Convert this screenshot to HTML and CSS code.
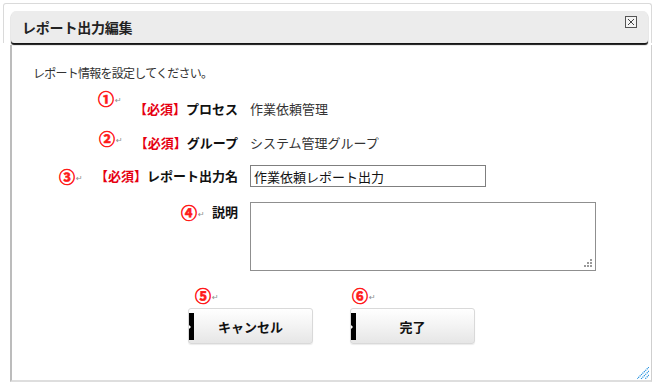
FILE: index.html
```html
<!DOCTYPE html>
<html lang="ja">
<head>
<meta charset="utf-8">
<title>レポート出力編集</title>
<link rel="stylesheet" href="styles.css">
</head>
<body>
<div class="dialog">
  <div class="head-frame">
    <div class="titlebar">
      <span class="title">レポート出力編集</span>
      <span class="close">
        <svg width="12" height="12" viewBox="0 0 12 12"><rect x="0.5" y="0.5" width="11" height="11" fill="#f4f4f4" stroke="#555"/><path d="M3 3L9 9M9 3L3 9" stroke="#444" stroke-width="1"/></svg>
      </span>
    </div>
  </div>
  <div class="panel">
    <p class="intro">レポート情報を設定してください。</p>

    <div class="row r1">
      <span class="mark m1"><span class="num">①</span><span class="ret">↵</span></span>
      <div class="label"><span class="req">【必須】</span>プロセス</div>
      <div class="value">作業依頼管理</div>
    </div>

    <div class="row r2">
      <span class="mark m2"><span class="num">②</span><span class="ret">↵</span></span>
      <div class="label"><span class="req">【必須】</span>グループ</div>
      <div class="value">システム管理グループ</div>
    </div>

    <div class="row r3">
      <span class="mark m3"><span class="num">③</span><span class="ret">↵</span></span>
      <div class="label"><span class="req">【必須】</span>レポート出力名</div>
      <div class="value"><input class="text-input" type="text" value="作業依頼レポート出力"></div>
    </div>

    <div class="row r4">
      <span class="mark m4"><span class="num">④</span><span class="ret">↵</span></span>
      <div class="label">説明</div>
      <div class="value">
        <div class="ta-wrap">
          <textarea class="text-area"></textarea>
          <svg class="ta-grip" width="8" height="8" viewBox="0 0 8 8"><g fill="#9a9a9a"><rect x="6" y="0" width="2" height="2"/><rect x="3" y="3" width="2" height="2"/><rect x="6" y="3" width="2" height="2"/><rect x="0" y="6" width="2" height="2"/><rect x="3" y="6" width="2" height="2"/><rect x="6" y="6" width="2" height="2"/></g></svg>
        </div>
      </div>
    </div>

    <div class="actions">
      <div class="btn-slot">
        <span class="mark m5"><span class="num">⑤</span><span class="ret">↵</span></span>
        <button class="btn" type="button">キャンセル</button>
      </div>
      <div class="btn-slot">
        <span class="mark m6"><span class="num">⑥</span><span class="ret">↵</span></span>
        <button class="btn" type="button">完了</button>
      </div>
    </div>

    <svg class="resize-grip" width="12" height="12" viewBox="0 0 12 12">
      <g stroke="#1f8fe0" stroke-width="1.2" stroke-dasharray="1.2 0.8">
        <path d="M12 0L0 12"/>
        <path d="M12 4L4 12"/>
        <path d="M12 8L8 12"/>
      </g>
    </svg>
  </div>
</div>
</body>
</html>
```

FILE: styles.css
```css
html, body {
  margin: 0;
  padding: 0;
  background: #ffffff;
}

body {
  font-family: "Noto Sans CJK JP", "Noto Sans", sans-serif;
  color: #222;
}

.dialog {
  position: relative;
  width: 649px;
  height: 379px;
  margin: 3px 0 0 3px;
}

.head-frame {
  border: 1px solid #dadada;
  border-bottom: none;
  border-radius: 3px 3px 0 0;
  padding: 7px 3px 0 7px;
}

.titlebar {
  height: 32px;
  background: #ececec;
  border-radius: 5px 5px 3px 3px;
  box-shadow: 0 2px 1px #151515;
  display: flex;
  align-items: center;
  justify-content: space-between;
  padding: 0 11px 0 11px;
}

.title {
  font-size: 14px;
  font-weight: bold;
  color: #222;
  letter-spacing: -0.2px;
}

.close {
  align-self: flex-start;
  margin-top: 5px;
  width: 12px;
  height: 12px;
  display: block;
}

.close svg {
  display: block;
}

.panel {
  position: relative;
  margin: 2px 0 0 7px;
  height: 337px;
  box-sizing: border-box;
  border-left: 2px solid #bcbcbc;
  border-right: 1px solid #cfcfcf;
  border-bottom: 2px solid #dedede;
}

.intro {
  margin: 0 0 0 21px;
  padding-top: 20px;
  font-size: 12px;
  line-height: 16px;
  color: #333;
  letter-spacing: -0.75px;
}

.row {
  position: relative;
  display: flex;
  align-items: flex-start;
}

.r1 { margin-top: 18px; }
.r2 { margin-top: 14px; }
.r3 { margin-top: 12px; }
.r4 { margin-top: 15px; }

.label {
  flex: none;
  width: 226px;
  text-align: right;
  font-size: 13px;
  font-weight: bold;
  line-height: 20px;
  color: #111;
  white-space: nowrap;
}

.r3 .label {
  line-height: 22px;
}

.req {
  color: #e60012;
}

.value {
  margin-left: 12px;
  font-size: 13px;
  line-height: 20px;
  color: #333;
}

.text-input {
  display: block;
  box-sizing: border-box;
  width: 236px;
  height: 22px;
  margin: 0;
  border: 1px solid #7f7f7f;
  padding: 0 3px;
  font-family: "Noto Sans CJK JP", sans-serif;
  font-size: 13px;
  color: #111;
  background: #fff;
  outline: none;
}

.ta-wrap {
  position: relative;
  width: 346px;
  height: 69px;
}

.text-area {
  display: block;
  box-sizing: border-box;
  width: 346px;
  height: 69px;
  margin: 0;
  border: 1px solid #8f8f8f;
  resize: none;
  background: #fff;
  outline: none;
}

.ta-grip {
  position: absolute;
  right: 4px;
  bottom: 4px;
}

/* annotation marks */
.mark {
  position: absolute;
  display: flex;
  align-items: center;
  height: 16px;
  white-space: nowrap;
}

.num {
  font-family: "Noto Sans CJK JP", sans-serif;
  font-size: 16px;
  font-weight: bold;
  line-height: 16px;
  color: #ff1a1a;
  -webkit-text-stroke: 0.6px #ff1a1a;
}

.ret {
  font-family: "DejaVu Sans", sans-serif;
  font-size: 8px;
  line-height: 8px;
  color: #8c8c8c;
  margin-left: 1px;
  margin-top: 5px;
}

.m1 { left: 86px; top: -9px; }
.m2 { left: 87px; top: -3px; }
.m3 { left: 47px; top: 3px; }
.m4 { left: 169px; top: 2px; }
.m5 { left: 7px; top: -21px; }
.m6 { left: 2px; top: -21px; }

/* buttons */
.actions {
  display: flex;
  gap: 37px;
  margin: 37px 0 0 176px;
}

.btn-slot {
  position: relative;
}

.btn {
  position: relative;
  display: block;
  width: 125px;
  height: 36px;
  margin: 0;
  padding: 0;
  border: 1px solid #d9d9d9;
  border-radius: 3px;
  background: linear-gradient(#ffffff, #f3f3f3 50%, #e6e6e6);
  box-shadow: 0 1px 1px rgba(0, 0, 0, 0.08);
  font-family: "Noto Sans CJK JP", sans-serif;
  font-size: 13px;
  font-weight: bold;
  color: #111;
  cursor: pointer;
}

.btn::before {
  content: "";
  position: absolute;
  left: 0;
  top: 4px;
  bottom: 3px;
  width: 5px;
  background: #000;
}

.btn::after {
  content: "";
  position: absolute;
  left: 0;
  top: 16px;
  border-top: 2px solid transparent;
  border-bottom: 2px solid transparent;
  border-left: 2px solid #fff;
}

.resize-grip {
  position: absolute;
  right: 2px;
  bottom: 1px;
}
```
